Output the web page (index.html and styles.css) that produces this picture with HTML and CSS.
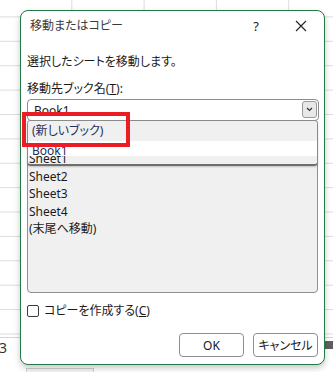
FILE: index.html
```html
<!DOCTYPE html>
<html lang="ja">
<head>
    <meta charset="UTF-8">
    <meta name="viewport" content="width=device-width, initial-scale=1.0">
    <title>移動またはコピー</title>
    <link rel="stylesheet" href="styles.css">
</head>
<body>

    <div class="sheet">
        <div class="grid"></div>
        <div class="sheet-footer">
            <span class="row-no">3</span>
            <span class="tab"></span>
            <span class="thumb"></span>
        </div>

        <div class="dialog">
            <div class="titlebar">
                <span class="title">移動またはコピー</span>
                <span class="help">?</span>
                <svg class="close" width="12" height="12" viewBox="0 0 12 12">
                    <path d="M1 1 L11 11 M11 1 L1 11" stroke="#222" stroke-width="1.1" fill="none"/>
                </svg>
            </div>

            <div class="content">
                <p class="msg">選択したシートを移動します。</p>
                <div class="field-label">移動先ブック名(<u>T</u>):</div>
                <div class="combo">
                    <span>Book1</span>
                    <span class="combo-btn">
                        <svg width="7" height="5" viewBox="0 0 7 5">
                            <path d="M1 1 L3.5 3.5 L6 1" stroke="#333" stroke-width="1.2" fill="none"/>
                        </svg>
                    </span>
                </div>
                <!-- the "insert before" label sits under the open dropdown -->
                <ul class="sheet-list">
                    <li>Sheet1</li>
                    <li>Sheet2</li>
                    <li>Sheet3</li>
                    <li>Sheet4</li>
                    <li>(末尾へ移動)</li>
                </ul>
                <label class="check">
                    <span class="box"></span>
                    <span>コピーを作成する(<u>C</u>)</span>
                </label>
                <div class="buttons">
                    <button>OK</button>
                    <button>キャンセル</button>
                </div>
            </div>

            <!-- open dropdown of the combo -->
            <div class="dropdown">
                <div class="option selected">(新しいブック)</div>
                <div class="option">Book1</div>
            </div>
            <div class="marker"></div>
        </div>
    </div>

</body>
</html>
```

FILE: styles.css
```css
body {
    margin: 0;
    font-family: "Noto Sans", "Noto Sans CJK JP", sans-serif;
    font-feature-settings: "palt";
    font-size: 12px;
    color: #1a1a1a;
    background: #ffffff;
}
.sheet {
    position: relative;
    width: 333px;
    height: 372px;
    overflow: hidden;
}
.grid {
    height: 337px;
    background-image:
        linear-gradient(to right, transparent 71.3px, #dcdcdc 71.3px),
        linear-gradient(to bottom, transparent 23.4px, #dcdcdc 23.4px);
    background-size: 72.3px 100%, 100% 24.4px;
    background-position: 0 0, 0 -7px;
    border-bottom: 1px solid #d6d6d6;
}
.sheet-footer {
    display: flex;
    align-items: flex-start;
    height: 34px;
    background: #ffffff;
}
.row-no {
    font-size: 14px;
    line-height: 16px;
    margin-top: 2px;
    margin-left: -1px;
    color: #333;
}
.tab {
    width: 66px;
    height: 10px;
    margin-top: 30px;
    margin-left: 19px;
    background: #f4f4f4;
    border: 1px solid #d0d0d0;
}
.thumb {
    margin-left: auto;
    margin-top: 3px;
    width: 8px;
    height: 8px;
    background: #5f5f5f;
}

/* dialog */
.dialog {
    position: absolute;
    left: 20px;
    top: 10px;
    width: 305px;
    height: 355px;
    box-sizing: border-box;
    background: #ffffff;
    border: 1px solid #1f7a46;
    border-radius: 8px;
    box-shadow: 0 3px 6px rgba(0, 0, 0, 0.22);
}
.titlebar {
    display: flex;
    align-items: center;
    height: 30px;
    padding-left: 9px;
}
.title {
    color: #3a3a3a;
    line-height: 18px;
}
.help {
    margin-left: auto;
    font-size: 13px;
    color: #222;
}
.close {
    margin-left: 36px;
    margin-right: 17px;
}
.content {
    padding: 0 6px;
}
.msg {
    margin: 12px 0 0;
    line-height: 18px;
}
.field-label {
    margin-top: 9px;
    line-height: 18px;
}
.combo {
    display: flex;
    align-items: center;
    justify-content: space-between;
    margin-top: 1px;
    height: 22px;
    box-sizing: border-box;
    border: 1px solid #8d8d8d;
    border-radius: 4px;
    padding: 0 1px 0 6px;
    width: 292px;
}
.combo-btn {
    display: flex;
    align-items: center;
    justify-content: center;
    width: 15px;
    height: 17px;
    background: #e8e8e8;
    border: 1px solid #9a9a9a;
    border-radius: 3px;
    box-sizing: border-box;
    margin-top: -2px;
}
.sheet-list {
    list-style: none;
    margin: 27px 0 0;
    padding: 1px 0 0 1px;
    height: 145px;
    box-sizing: border-box;
    background: #f0f0f0;
    border: 1px solid #909090;
    border-radius: 4px;
}
.sheet-list li {
    line-height: 17.5px;
}
.check {
    display: flex;
    align-items: center;
    gap: 5px;
    margin-top: 9px;
    line-height: 18px;
}
.box {
    width: 12px;
    height: 12px;
    box-sizing: border-box;
    border: 1px solid #3c3c3c;
    border-radius: 2px;
}
.buttons {
    display: flex;
    justify-content: flex-end;
    gap: 9px;
    margin-top: 13px;
}
.buttons button {
    width: 65px;
    height: 24px;
    font-family: inherit;
    font-size: 12px;
    font-feature-settings: "palt";
    color: #1a1a1a;
    background: #ffffff;
    border: 1px solid #8e8e8e;
    border-radius: 4px;
    padding: 0;
}

/* open dropdown + highlight */
.dropdown {
    position: absolute;
    left: 6px;
    top: 109px;
    width: 291px;
    height: 46px;
    box-sizing: border-box;
    border: 1px solid #8a8a8a;
    border-bottom: 2px solid #6e6e6e;
    border-radius: 4px;
    box-shadow: 0 1px 2px rgba(0, 0, 0, 0.2);
}
.option {
    color: #24305e;
    padding-left: 4px;
    line-height: 20px;
    background: #ffffff;
}
.option.selected {
    background: #f0f0f0;
    border-radius: 3px 3px 0 0;
}
.option + .option {
    height: 15px;
    overflow: hidden;
}
.marker {
    position: absolute;
    left: 1px;
    top: 101px;
    width: 108px;
    height: 35px;
    box-sizing: border-box;
    border: 4px solid #ec1c24;
}
```
